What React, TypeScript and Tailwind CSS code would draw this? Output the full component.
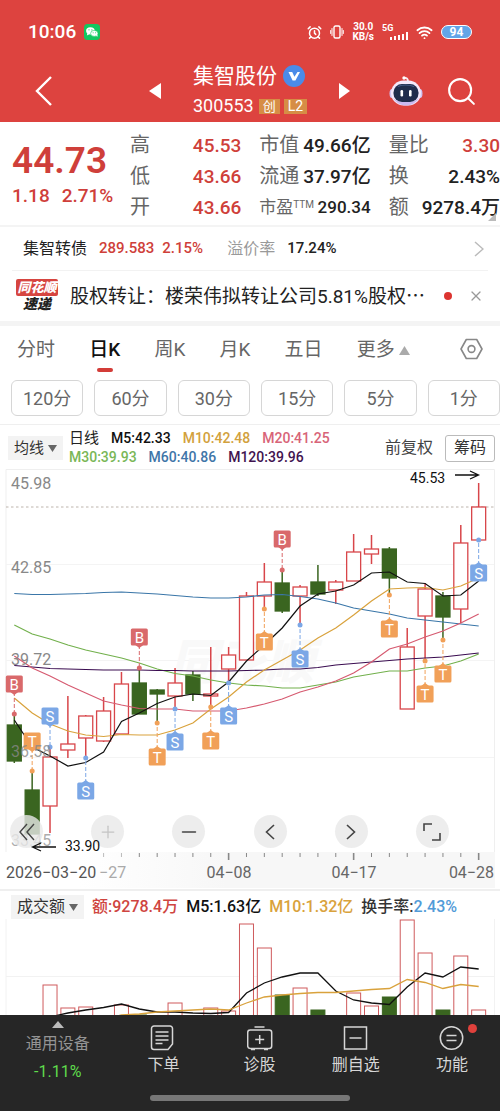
import React from "react";
import { AlarmClock, Minus, Plus, Search, Wifi, X } from "lucide-react";

const RED = "#d8464a";
const GREEN = "#3a6520";

const xAt = (i: number) => 14.3 + i * 17.86;

type Candle = { up: boolean; high: number; top: number; bottom: number; low: number };

const c = (up: boolean, high: number, top: number, bottom: number, low: number): Candle => ({ up, high, top, bottom, low });

const candles: Candle[] = [
  c(false, 715, 725, 761, 763),
  c(false, 771, 790, 834, 834),
  c(true, 747, 757, 806, 833),
  c(true, 696, 744, 750, 758),
  c(true, 715, 716, 738, 757),
  c(true, 697, 711, 741, 742),
  c(true, 672, 684, 734, 734),
  c(false, 667, 683, 714, 714),
  c(false, 689, 690, 694, 723),
  c(true, 668, 683, 696, 708),
  c(false, 671, 675, 694, 701),
  c(true, 647, 694, 696, 706),
  c(true, 647, 655, 669, 682),
  c(true, 592, 596, 660, 660),
  c(true, 563, 582, 596, 609),
  c(false, 570, 583, 611, 613),
  c(true, 585, 587, 596, 625),
  c(false, 565, 582, 594, 596),
  c(true, 580, 582, 590, 604),
  c(true, 534, 552, 581, 581),
  c(true, 535, 549, 554, 564),
  c(false, 547, 549, 578, 595),
  c(true, 628, 647, 709, 709),
  c(true, 583, 589, 616, 660),
  c(false, 592, 596, 617, 640),
  c(true, 525, 543, 609, 623),
  c(true, 483, 507, 540, 540),
];

const averages = [
  { color: "#3a76a8", ys: [593.5, 594.5, 594.5, 594, 593.5, 592.5, 592, 593, 594, 595.5, 597, 598, 598, 597, 595, 594.5, 596.5, 599, 603, 608, 611, 614, 618, 620, 622, 624, 626] },
  { color: "#72b04c", ys: [625, 634, 639, 645, 650, 654, 658, 663, 669, 673.5, 676, 680, 683, 685, 686, 688, 688, 685, 682, 677, 674, 671, 671, 668, 666, 661, 654] },
  { color: "#3a0c50", ys: [665.5, 667, 668.5, 669, 669.5, 670, 670, 670, 670.5, 670.5, 671, 671, 671, 670.5, 670, 669, 669, 667.5, 665, 663.5, 662, 660.5, 659, 658, 657, 655, 653] },
  { color: "#d65a70", ys: [656, 668, 676, 685, 693, 701, 705, 708.5, 709, 709, 711, 711, 711, 708, 704, 699, 692, 687, 681, 673, 662, 649, 644, 637, 631, 623, 614] },
  { color: "#d9a23c", ys: [698, 713, 724, 731, 735, 736.5, 734.5, 735, 735, 730, 723, 709, 697, 682, 670, 660, 650, 638, 628, 615, 601, 589, 588, 587.5, 590, 586, 578] },
  { color: "#111111", ys: [720, 747, 756, 766, 762.5, 752, 721.5, 713, 703.5, 697, 694, 695.5, 682, 661, 645, 628, 606, 594, 591, 585, 573, 572, 582, 583.5, 596, 595, 581] },
];

const markerColors: Record<string, string> = { B: "#d9696b", S: "#7ba7e6", T: "#f1a058" };

const markers: { i: number; kind: string; y: number; dot: number }[] = [
  { i: 0, kind: "B", y: 684, dot: 714 },
  { i: 1, kind: "T", y: 741, dot: 771 },
  { i: 2, kind: "S", y: 716, dot: 747 },
  { i: 4, kind: "S", y: 791, dot: 758 },
  { i: 7, kind: "B", y: 637, dot: 668 },
  { i: 8, kind: "T", y: 757, dot: 723 },
  { i: 9, kind: "S", y: 742, dot: 709 },
  { i: 11, kind: "T", y: 741, dot: 707 },
  { i: 12, kind: "S", y: 716, dot: 683 },
  { i: 14, kind: "T", y: 642, dot: 609 },
  { i: 15, kind: "B", y: 539, dot: 570 },
  { i: 16, kind: "S", y: 659, dot: 625 },
  { i: 21, kind: "T", y: 629, dot: 595 },
  { i: 23, kind: "T", y: 694, dot: 661 },
  { i: 24, kind: "T", y: 674, dot: 640 },
  { i: 26, kind: "S", y: 573, dot: 540 },
];

const volumes: { i: number; up: boolean; top: number }[] = [
  { i: 2, up: true, top: 984 },
  { i: 3, up: true, top: 1007 },
  { i: 4, up: true, top: 1006 },
  { i: 6, up: true, top: 1004 },
  { i: 7, up: false, top: 1014 },
  { i: 9, up: true, top: 1002 },
  { i: 11, up: true, top: 1007 },
  { i: 12, up: true, top: 1010 },
  { i: 13, up: true, top: 923 },
  { i: 14, up: true, top: 947 },
  { i: 15, up: false, top: 994 },
  { i: 16, up: true, top: 987 },
  { i: 17, up: false, top: 1009 },
  { i: 19, up: true, top: 992 },
  { i: 20, up: true, top: 1005 },
  { i: 21, up: false, top: 996 },
  { i: 22, up: true, top: 919 },
  { i: 23, up: true, top: 952 },
  { i: 24, up: false, top: 1009 },
  { i: 25, up: true, top: 955 },
  { i: 26, up: true, top: 1009 },
];

const volumeMa5 = [1022, 1020, 1016, 1012, 1009, 1006.5, 1003, 1008, 1011, 1011, 1012, 1012.5, 1011.5, 992, 982, 976, 972, 972, 990, 999, 1002, 1003.5, 986, 972, 976, 966, 968];
const volumeMa10 = [1030, 1028, 1026, 1024, 1020, 1018, 1014, 1013, 1011, 1010, 1009, 1008, 1009, 1002, 996, 994, 992.5, 991.5, 991.5, 990, 988.5, 987.5, 978.5, 981.5, 987.5, 983.5, 985.5];

const toPoints = (ys: number[]) => ys.map((y, i) => `${xAt(i).toFixed(1)},${y}`).join(" ");

function StatusBar() {
  return (
    <div className="flex items-center justify-between pt-5 pr-7 pl-7">
      <div className="flex items-center gap-2">
        <span className="text-[19px] leading-6 font-medium">10:06</span>
        <svg width="16" height="16" viewBox="0 0 16 16" aria-label="微信">
          <rect width="16" height="16" rx="3.5" fill="#12c860" />
          <ellipse cx="6.4" cy="6.8" rx="4.3" ry="3.6" fill="#fff" />
          <path d="M3.4 9l-.5 2.4 2.4-1.2z" fill="#fff" />
          <ellipse cx="10.3" cy="9.4" rx="3.7" ry="3" fill="#fff" stroke="#12c860" strokeWidth=".6" />
          <path d="M12 11.5l1.3 1.5.2-2.4z" fill="#fff" />
          <g fill="#12c860">
            <circle cx="5" cy="5.8" r=".6" />
            <circle cx="7.9" cy="5.8" r=".6" />
            <circle cx="9.1" cy="8.7" r=".5" />
            <circle cx="11.6" cy="8.7" r=".5" />
          </g>
        </svg>
      </div>
      <div className="flex items-center gap-2">
        <AlarmClock size={15} strokeWidth={2.4} />
        <svg width="14" height="14" viewBox="0 0 14 14" fill="none" stroke="#fff" strokeWidth="1.4" strokeLinecap="round">
          <rect x="4" y="1" width="6" height="12" rx="1.5" />
          <path d="M2 3.500v7M12 3.500v7M.7 5.500v3M13.300 5.500v3" strokeWidth="1" />
        </svg>
        <div className="text-center text-[10px] leading-[10px] font-bold">
          <div>30.0</div>
          <div>KB/s</div>
        </div>
        <svg width="26" height="18" viewBox="0 0 26 18" aria-label="5G">
          <text x="0" y="8" fontSize="9" fontWeight="700" fill="#fff">5G</text>
          <g fill="#fff">
            <rect x="8" y="14" width="2" height="3" />
            <rect x="12" y="13" width="2" height="4" />
            <rect x="16" y="12" width="2" height="5" />
            <rect x="20" y="11" width="2" height="6" />
            <rect x="24" y="9" width="2" height="8" />
          </g>
        </svg>
        <Wifi size={17} strokeWidth={2.6} />
        <span className="flex h-[14px] w-[31px] items-center justify-center rounded-full border border-white bg-[#62a5e8] text-[12px] font-bold">94</span>
      </div>
    </div>
  );
}

function Robot() {
  return (
    <svg width="34" height="32" viewBox="0 0 34 32">
      <path d="M19 7c0-3-1-4.500-4-4" fill="none" stroke="#f7e9f0" strokeWidth="1.800" strokeLinecap="round" />
      <circle cx="15" cy="3" r="1.700" fill="#fff" />
      <ellipse cx="3" cy="18.500" rx="2.500" ry="4.500" fill="#cfc3f2" />
      <ellipse cx="31" cy="18.500" rx="2.500" ry="4.500" fill="#cfc3f2" />
      <rect x="2" y="5.500" width="30" height="25" rx="12.500" fill="#f3e8fb" />
      <path d="M4 23c3 5 8 7.500 13 7.500S27 28 30 23c-3 3-8 4-13 4s-10-1-13-4z" fill="#cbb9f0" />
      <rect x="4.500" y="9" width="25" height="18" rx="8.500" fill="#1f2c4c" />
      <path d="M9 11.500c4-2 11-2 16 0" fill="none" stroke="#49608c" strokeWidth="1.200" />
      <rect x="11.500" y="15" width="2.600" height="6.500" rx="1.200" fill="#fff" />
      <rect x="20" y="15" width="2.600" height="6.500" rx="1.200" fill="#fff" />
    </svg>
  );
}

function Header() {
  return (
    <header className="bg-[#dd433f] text-white">
      <StatusBar />
      <div className="grid grid-cols-[1fr_auto_1fr] items-center px-6 pt-[18px] pb-0.5">
        <div className="flex items-center justify-between">
          <button aria-label="返回" className="flex">
            <svg width="32" height="30" viewBox="0 0 32 30" fill="none" stroke="#fff" strokeWidth="2.400">
              <path d="M27 1L13 15l14 14" />
            </svg>
          </button>
          <button aria-label="上一只" className="mr-8 flex">
            <svg width="12" height="16" viewBox="0 0 12 16" fill="#fff"><path d="M12 0v16L0 8z" /></svg>
          </button>
        </div>
        <div className="text-center">
          <h1 className="flex items-center gap-1.5 text-[21px] leading-7">
            集智股份
            <svg width="22" height="22" viewBox="0 0 22 22" aria-label="认证">
              <circle cx="11" cy="11" r="11" fill="#4b8be8" />
              <path d="M5.500 7h3.700l2.200 4.700L14.500 7H17l-4.600 8.500h-2.800z" fill="#fff" />
            </svg>
          </h1>
          <div className="flex items-center justify-center gap-1 pt-0.5 text-[18px] leading-7">
            300553
            <span className="ml-px bg-[#d68d45] px-1 text-[13px] leading-[15px]">创</span>
            <span className="bg-[#d68d45] px-1 text-[14px] leading-[15px]">L2</span>
          </div>
        </div>
        <div className="flex items-center">
          <button aria-label="下一只" className="ml-8 flex">
            <svg width="11" height="16" viewBox="0 0 11 16" fill="#fff"><path d="M0 0v16l11-8z" /></svg>
          </button>
          <button aria-label="智能助手" className="ml-auto flex"><Robot /></button>
          <button aria-label="搜索" className="-mr-0.5 ml-[22px] flex">
            <Search size={33} strokeWidth={1.5} />
          </button>
        </div>
      </div>
    </header>
  );
}

const stats: { label: React.ReactNode; value: string; red?: boolean; compact?: boolean }[] = [
  { label: "高", value: "45.53", red: true },
  { label: "市值", value: "49.66亿" },
  { label: "量比", value: "3.30", red: true },
  { label: "低", value: "43.66", red: true },
  { label: "流通", value: "37.97亿" },
  { label: "换", value: "2.43%" },
  { label: "开", value: "43.66", red: true },
  { label: <>市盈<sup className="text-[10px]">TTM</sup></>, value: "290.34", compact: true },
  { label: "额", value: "9278.4万" },
];

function Quote() {
  return (
    <section className="relative flex border-b-2 border-[#f4f4f4] pt-2 pb-0.5">
      <div className="w-[130px] shrink-0 pt-2 pl-3 text-[#cf3f3a]">
        <div className="text-[37px] leading-[46px] font-semibold">44.73</div>
        <div className="flex gap-3 text-[19px] leading-6 font-medium">
          <span>1.18</span>
          <span>2.71%</span>
        </div>
      </div>
      <dl className="grid flex-1 grid-cols-3 gap-x-[18px] text-[19px] leading-[31px]">
        {stats.map((s, i) => (
          <div key={i} className="flex justify-between whitespace-nowrap">
            <dt className={`text-[#666] ${s.compact ? "text-[17px]" : "text-[20px]"}`}>{s.label}</dt>
            <dd className={`font-medium ${s.red ? "text-[#cf3f3a]" : "text-[#222]"} ${s.compact ? "text-[17px]" : ""}`}>{s.value}</dd>
          </div>
        ))}
      </dl>
      <svg className="absolute right-1 bottom-1" width="8" height="8" viewBox="0 0 8 8"><path d="M8 0v8H0z" fill="#bbb" /></svg>
    </section>
  );
}

function BondRow() {
  return (
    <a href="#bond" className="mx-3 flex items-center border-b border-[#f2f2f2] py-2 pr-1 pl-[11px] text-[16px] leading-[27px]">
      <span className="text-[#222]">集智转债</span>
      <span className="ml-3 text-[15px] font-medium text-[#cf3f3a]">289.583</span>
      <span className="ml-2 text-[15px] font-medium text-[#cf3f3a]">2.15%</span>
      <span className="ml-6 text-[#999]">溢价率</span>
      <span className="ml-3 text-[15px] font-medium text-[#222]">17.24%</span>
      <svg className="ml-auto" width="10" height="16" viewBox="0 0 10 16" fill="none" stroke="#bbb" strokeWidth="1.500"><path d="M1 1l8 7-8 7" /></svg>
    </a>
  );
}

function NewsRow() {
  return (
    <div className="flex items-center border-b-[5px] border-[#f4f4f4] py-2 pr-4 pl-4">
      <div className="w-[42px] shrink-0 text-center font-black italic">
        <div className="rounded-[2px] bg-[#d64540] text-[13px] leading-[17px] text-white">同花顺</div>
        <div className="text-[14px] leading-[17px] text-[#222]">速递</div>
      </div>
      <a href="#news" className="ml-3 min-w-0 truncate text-[19px] leading-8 text-[#222]">
        股权转让：楼荣伟拟转让公司5.81%股权<span className="font-['Noto_Sans_CJK_SC']">⋯</span>
      </a>
      <span className="ml-auto size-2 shrink-0 rounded-full bg-[#dc3430]" />
      <button aria-label="关闭" className="ml-4 flex text-[#999]"><X size={16} strokeWidth={1.8} /></button>
    </div>
  );
}

function Tabs() {
  const plain = "text-[#666]";
  return (
    <>
      <nav className="flex items-start justify-between px-[17px] pt-2 text-[19px] leading-8">
        <button className={plain}>分时</button>
        <button className="flex flex-col items-center font-medium text-[#111]">
          日K
          <span className="mt-0.5 h-1 w-4 rounded-full bg-[#d33c38]" />
        </button>
        <button className={plain}>周K</button>
        <button className={plain}>月K</button>
        <button className={plain}>五日</button>
        <button className="flex items-center gap-1 text-[#666]">
          更多
          <svg width="11" height="9" viewBox="0 0 11 9" fill="#aaa"><path d="M5.500 0L11 9H0z" /></svg>
        </button>
        <button aria-label="设置" className="ml-4 flex pt-1">
          <svg width="23" height="22" viewBox="0 0 23 22" fill="none" stroke="#888" strokeWidth="1.600" strokeLinejoin="round">
            <path d="M6.300 1.500h10.400L22 11l-5.300 9.500H6.300L1 11z" />
            <circle cx="11.500" cy="11" r="3.400" />
          </svg>
        </button>
      </nav>
      <div className="mt-2 flex gap-[11px] overflow-hidden border-b border-[#efefef] pb-2 pl-[11px] text-[18px] text-[#666]">
        {["120分", "60分", "30分", "15分", "5分", "1分"].map((p) => (
          <button key={p} className="h-9 flex-1 rounded-md border border-[#d6d6d6]">{p}</button>
        ))}
      </div>
    </>
  );
}

function Legend() {
  return (
    <div className="flex items-center px-2 pt-1 pb-0.5">
      <button className="flex h-6 items-center gap-1 bg-[#f3f3f3] px-1.5 text-[15px] text-[#333]">
        均线
        <svg width="9" height="7" viewBox="0 0 9 7" fill="#666"><path d="M0 0h9L4.500 7z" /></svg>
      </button>
      <div className="ml-1.5 text-[14px] leading-[19px] font-medium">
        <div className="flex gap-3">
          <span className="text-[15px] font-normal text-[#222]">日线</span>
          <span className="text-[#111]">M5:42.33</span>
          <span className="text-[#d2a13d]">M10:42.48</span>
          <span className="text-[#d86478]">M20:41.25</span>
        </div>
        <div className="flex gap-3">
          <span className="text-[#7ab757]">M30:39.93</span>
          <span className="text-[#3f76a8]">M60:40.86</span>
          <span className="text-[#41134f]">M120:39.96</span>
        </div>
      </div>
      <button className="ml-auto text-[16px] text-[#444]">前复权</button>
      <button className="mr-[-3px] ml-3 h-[27px] rounded-[3px] border border-[#bbb] px-2 text-[16px] text-[#333]">筹码</button>
    </div>
  );
}

function ChartButton({ label, faint, children }: { label: string; faint?: boolean; children: React.ReactNode }) {
  return (
    <button
      aria-label={label}
      className={`flex size-[33px] items-center justify-center rounded-full bg-[#e8e8e8]/80 ${faint ? "text-[#c4c4c4]" : "text-[#444]"}`}
    >
      {children}
    </button>
  );
}

function PriceChart() {
  return (
    <div className="relative">
      <svg className="block w-full" viewBox="0 469 500 383">
        <g stroke="#efefef" fill="none">
          <path d="M6 469.500H494.500V852M6 469.500V852" />
          <path d="M6 564.500H494M6 660.500H494M6 757.500H494" stroke="#f4f4f4" />
        </g>
        <text x="170" y="679" fontSize="48" fontWeight="900" fontStyle="italic" fill="#f9f9f9">同花顺</text>
        <path d="M6 507H494" stroke="#bdb4ac" strokeDasharray="2.500 2.500" />
        {candles.map((k, i) => {
          const x = xAt(i);
          const color = k.up ? RED : GREEN;
          return (
            <g key={i} stroke={color} strokeWidth="1.500">
              <path d={`M${x} ${k.high}V${k.top}M${x} ${k.bottom}V${k.low}`} />
              <rect x={x - 7} y={k.top} width="14" height={k.bottom - k.top} fill={k.up ? "#fff" : color} strokeWidth="1.300" />
            </g>
          );
        })}
        {averages.map((a) => (
          <polyline key={a.color} points={toPoints(a.ys)} fill="none" stroke={a.color} strokeWidth="1.200" />
        ))}
        {markers.map((m) => {
          const x = xAt(m.i);
          const color = markerColors[m.kind];
          const edge = m.dot > m.y ? m.y + 8 : m.y - 8;
          const tip = m.dot > m.y ? m.y + 11 : m.y - 11;
          return (
            <g key={m.i}>
              <path d={`M${x} ${edge}V${m.dot}`} stroke={color} strokeDasharray="4 2" />
              <circle cx={x} cy={m.dot} r="2.500" fill={color} />
              <path d={`M${x - 4} ${edge}L${x} ${tip}L${x + 4} ${edge}z`} fill={color} />
              <rect x={x - 8.5} y={m.y - 8.5} width="17" height="17" rx="1.500" fill={color} />
              <text x={x} y={m.y + 5.5} fontSize="15" textAnchor="middle" fill="#fff">{m.kind}</text>
            </g>
          );
        })}
        <g fontSize="16" fill="#888">
          <text x="11" y="489">45.98</text>
          <text x="11" y="573">42.85</text>
          <text x="11" y="665">39.72</text>
          <text x="11" y="757" fillOpacity=".8">36.58</text>
          <text x="11" y="846" fillOpacity=".7">33.45</text>
        </g>
      </svg>
      <div className="absolute right-[51px] bottom-1 left-[10px] flex justify-between">
        <ChartButton label="快退">
          <svg width="18" height="18" viewBox="0 0 18 18" fill="none" stroke="#444" strokeWidth="1.400"><path d="M9 1L2 9l7 8M16 1L9 9l7 8" /></svg>
        </ChartButton>
        <ChartButton label="放大" faint><Plus size={20} strokeWidth={1.5} /></ChartButton>
        <ChartButton label="缩小"><Minus size={22} strokeWidth={1.8} /></ChartButton>
        <ChartButton label="左移">
          <svg width="10" height="16" viewBox="0 0 10 16" fill="none" stroke="#444" strokeWidth="1.600"><path d="M9 1L1.500 8 9 15" /></svg>
        </ChartButton>
        <ChartButton label="右移">
          <svg width="10" height="16" viewBox="0 0 10 16" fill="none" stroke="#444" strokeWidth="1.600"><path d="M1 1l7.500 7L1 15" /></svg>
        </ChartButton>
        <ChartButton label="全屏">
          <svg width="18" height="18" viewBox="0 0 18 18" fill="none" stroke="#444" strokeWidth="1.600"><path d="M1 8V1h8M17 10v7H9" /></svg>
        </ChartButton>
      </div>
      <svg className="pointer-events-none absolute inset-0 w-full" viewBox="0 469 500 383">
        <g fontSize="14" fill="#111">
          <text x="410" y="483">45.53</text>
          <text x="65" y="851">33.90</text>
        </g>
        <path d="M455 475h23M470 471l8.500 4-8.500 4M56 847H33M41 843l-8.500 4 8.500 4" fill="none" stroke="#111" strokeWidth="1.300" />
      </svg>
    </div>
  );
}

function DateAxis() {
  return (
    <svg className="block w-full" viewBox="0 852 500 37">
      <defs>
        <linearGradient id="axis" x1="0" x2="1">
          <stop offset="0.150" stopColor="#fff" />
          <stop offset="0.450" stopColor="#f7f7f7" />
        </linearGradient>
      </defs>
      <rect x="6" y="852" width="489" height="36" fill="url(#axis)" />
      {candles.map((_, i) =>
        i < 5 ? null : (
          <path
            key={i}
            d={`M${xAt(i)} 853v${(i - 5) % 7 === 0 && i > 5 ? 7 : 4}`}
            stroke={i < 7 ? "#bbb" : "#888"}
            strokeWidth={(i - 5) % 7 === 0 && i > 5 ? 1.6 : 1}
          />
        ),
      )}
      <g fontSize="16" fill="#666">
        <text x="6" y="878" fill="#555">2026−03−20</text>
        <text x="99" y="878" fill="#aaa">−27</text>
        <text x="229" y="878" textAnchor="middle">04−08</text>
        <text x="354" y="878" textAnchor="middle">04−17</text>
        <text x="494" y="878" textAnchor="end">04−28</text>
      </g>
    </svg>
  );
}

function VolumePanel() {
  return (
    <section className="border-t-2 border-[#efefef]">
      <div className="flex items-center gap-2 pt-1 pl-[11px] text-[16px] leading-6 font-medium whitespace-nowrap">
        <button className="flex h-6 items-center gap-1 bg-[#f3f3f3] px-1.5 font-normal text-[#333]">
          成交额
          <svg width="9" height="7" viewBox="0 0 9 7" fill="#666"><path d="M0 0h9L4.500 7z" /></svg>
        </button>
        <span className="text-[#cf4540]">额:9278.4万</span>
        <span className="text-[#111]">M5:1.63亿</span>
        <span className="text-[#d9a23c]">M10:1.32亿</span>
        <span className="text-[#333]">换手率:<span className="text-[#519bd8]">2.43%</span></span>
      </div>
      <svg className="block w-full" viewBox="0 918 500 149">
        <path d="M6 917V1067M494.500 917V1067M6 975.500H494" stroke="#f2f2f2" />
        {volumes.map((v) => (
          <rect
            key={v.i}
            x={xAt(v.i) - 7}
            y={v.top}
            width="14"
            height={1060 - v.top}
            fill={v.up ? "#fff" : GREEN}
            stroke={v.up ? "#cf5a5c" : GREEN}
            strokeWidth="1"
          />
        ))}
        <polyline points={toPoints(volumeMa5)} fill="none" stroke="#111" strokeWidth="1.300" />
        <polyline points={toPoints(volumeMa10)} fill="none" stroke="#d9a23c" strokeWidth="1.300" />
      </svg>
    </section>
  );
}

const actions: { label: string; icon: React.ReactNode; dot?: boolean }[] = [
  { label: "下单", icon: <path d="M4 1h16a2.500 2.500 0 0 1 2.500 2.500V19L18 24.500H4A2.500 2.500 0 0 1 1.500 22V3.500A2.500 2.500 0 0 1 4 1zM5.500 7h13M5.500 11h13M5.500 15h13M5.500 18.500h7" /> },
  { label: "诊股", icon: <><rect x="0.700" y="5" width="24" height="18.500" rx="2.500" /><path d="M7.500 2h10M12.700 10v9M8.200 14.500h9M4 24.500h4M17 24.500h4" /></> },
  { label: "删自选", icon: <><rect x="1.500" y="2" width="22" height="22" /><path d="M6.500 13h12" /></> },
  { label: "功能", icon: <><circle cx="12.500" cy="13" r="11.200" /><path d="M7.500 10.500h10M7.500 15.500h10" /></>, dot: true },
];

function BottomBar() {
  return (
    <footer className="relative z-10 shrink-0 bg-[#262626] pb-[10px]">
      <div className="grid h-20 grid-cols-[1.2fr_1fr_1fr_1fr_1fr]">
        <button className="flex flex-col items-center pt-[6px] text-[16px] text-[#949494]">
          <svg width="12" height="7" viewBox="0 0 12 7" fill="#bbb"><path d="M6 0l6 7H0z" /></svg>
          <span className="mt-1 leading-6">通用设备</span>
          <span className="mt-1 leading-6 text-[#5fdc4c]">-1.11%</span>
        </button>
        {actions.map((a) => (
          <button key={a.label} className="flex flex-col items-center pt-[10px] text-[16px] text-[#d6d6d6]">
            <span className="relative">
              <svg width="26" height="26" viewBox="0 0 26 26" fill="none" stroke="#d6d6d6" strokeWidth="1.500">{a.icon}</svg>
              {a.dot && <span className="absolute -top-px -right-3 size-[9px] rounded-full bg-[#e0413c]" />}
            </span>
            <span className="mt-0.5 leading-6">{a.label}</span>
          </button>
        ))}
      </div>
      <div className="mx-auto h-[6px] w-2/5 rounded-full bg-[#777]" />
    </footer>
  );
}

export default function App() {
  return (
    <div className="flex h-dvh flex-col overflow-hidden bg-white font-['Roboto','Noto_Sans_CJK_SC',sans-serif]">
      <Header />
      <main className="min-h-0 flex-1 overflow-y-auto [scrollbar-width:none]">
        <Quote />
        <BondRow />
        <NewsRow />
        <Tabs />
        <Legend />
        <PriceChart />
        <DateAxis />
        <VolumePanel />
      </main>
      <BottomBar />
    </div>
  );
}
